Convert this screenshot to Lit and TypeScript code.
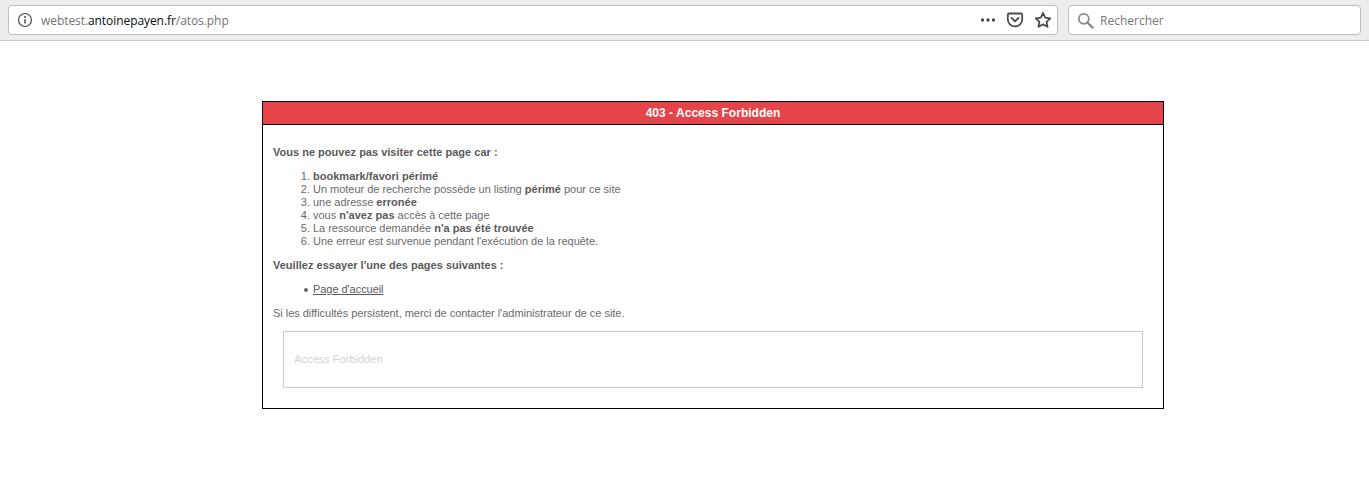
import { LitElement, html, css } from "lit";
import { customElement } from "lit/decorators.js";

@customElement("app-root")
export class AppRoot extends LitElement {
  static styles = css`
    :host { display: block; background: #fff; min-height: 488px; font-family: "Liberation Sans", Arial, sans-serif; }
    .toolbar { display: flex; align-items: center; gap: 10px; height: 40px; box-sizing: content-box; padding: 0 8px; background: #ededed; border-bottom: 1px solid #c8c8c8; font-family: "Open Sans", "Noto Sans", sans-serif; font-size: 12px; }
    .field { display: flex; align-items: center; box-sizing: border-box; height: 30px; background: #fff; border: 1px solid #bdbdbd; border-radius: 4px; }
    .url { width: 1050px; padding: 0 5px 0 8px; }
    .search { width: 293px; padding-left: 8px; color: #777; }
    .info { margin-right: 8px; flex: none; }
    .address { flex: 1; color: #737373; white-space: nowrap; letter-spacing: -0.07px; }
    .address b { font-weight: 400; color: #0c0c0d; }
    .actions { display: flex; align-items: center; gap: 10px; color: #4a4a4f; }
    .actions svg { display: block; flex: none; }
    .glass { margin-right: 6px; flex: none; }
    .page { padding: 60px 0 0 262px; }
    .box { box-sizing: border-box; width: 902px; height: 308px; border: 1px solid #000; font-size: 11px; line-height: 13px; color: #6a6a6a; letter-spacing: -0.025px; }
    .title { height: 22px; line-height: 22px; background: #e5444a; border-bottom: 1px solid #000; color: #fff; font-size: 12px; font-weight: 700; text-align: center; letter-spacing: 0.02px; }
    .body { padding: 21px 10px 0; }
    p { margin: 0 0 11px; }
    .lead { font-weight: 700; color: #5a5a5a; letter-spacing: 0.01px; }
    ol, ul { margin: 0 0 11px; padding: 0 0 0 40px; }
    ul { list-style: none; }
    ul li { display: flex; align-items: center; }
    ul li::before { content: ""; flex: none; width: 4px; height: 4px; margin: 0 5px 0 -9px; border-radius: 50%; background: #6a6a6a; }
    li b { color: #5a5a5a; letter-spacing: 0.02px; }
    a { color: #5a5a5a; text-decoration: underline; letter-spacing: -0.05px; }
    .note { box-sizing: border-box; height: 57px; margin: 0 10px; padding: 0 10px; border: 1px solid #c8c8c8; display: flex; align-items: center; color: #d3d3d3; letter-spacing: 0.03px; }
  `;

  render() {
    return html`
      <div class="toolbar">
        <div class="field url">
          <svg class="info" width="16" height="16" viewBox="0 0 16 16" fill="none" stroke="#4a4a4f">
            <circle cx="8" cy="8" r="6.5" stroke-width="1.2"></circle>
            <path d="M8 7.2v4.2" stroke-width="1.5"></path>
            <circle cx="8" cy="5" r="1" fill="#4a4a4f" stroke="none"></circle>
          </svg>
          <span class="address">webtest.<b>antoinepayen.fr</b>/atos.php</span>
          <div class="actions">
            <svg width="16" height="16" viewBox="0 0 16 16" fill="#4a4a4f">
              <circle cx="2.5" cy="8" r="1.7"></circle><circle cx="8" cy="8" r="1.7"></circle><circle cx="13.5" cy="8" r="1.7"></circle>
            </svg>
            <svg width="18" height="18" viewBox="0 0 18 18" fill="none" stroke="#4a4a4f" stroke-width="1.8" stroke-linecap="round" stroke-linejoin="round">
              <path d="M3.2 2.5h11.6c.8 0 1.4.6 1.4 1.4v4.3c0 4-3.2 7.2-7.2 7.2s-7.2-3.2-7.2-7.2V3.900c0-.8.6-1.400 1.400-1.400z"></path>
              <path d="M5.600 7l3.400 3.300L12.400 7"></path>
            </svg>
            <svg width="18" height="18" viewBox="0 0 18 18" fill="none" stroke="#4a4a4f" stroke-width="1.800" stroke-linejoin="round">
              <path d="M9 2l2.200 4.600 5 .7-3.600 3.500.9 5L9 13.400l-4.500 2.400.9-5-3.600-3.500 5-.7z"></path>
            </svg>
          </div>
        </div>
        <div class="field search">
          <svg class="glass" width="17" height="17" viewBox="0 0 17 17" fill="none" stroke="#8a8a8a">
            <circle cx="6.800" cy="6.800" r="5" stroke-width="1.800"></circle>
            <path d="M10.600 10.600l5 5" stroke-width="2.200" stroke-linecap="round"></path>
          </svg>
          <span>Rechercher</span>
        </div>
      </div>
      <main class="page">
        <section class="box">
          <div class="title">403 - Access Forbidden</div>
          <div class="body">
            <p class="lead">Vous ne pouvez pas visiter cette page car :</p>
            <ol>
              <li><b>bookmark/favori périmé</b></li>
              <li>Un moteur de recherche possède un listing <b>périmé</b> pour ce site</li>
              <li>une adresse <b>erronée</b></li>
              <li>vous <b>n'avez pas</b> accès à cette page</li>
              <li>La ressource demandée <b>n'a pas été trouvée</b></li>
              <li>Une erreur est survenue pendant l'exécution de la requête.</li>
            </ol>
            <p class="lead">Veuillez essayer l'une des pages suivantes :</p>
            <ul>
              <li><a href="#">Page d'accueil</a></li>
            </ul>
            <p>Si les difficultés persistent, merci de contacter l'administrateur de ce site.</p>
            <div class="note">Access Forbidden</div>
          </div>
        </section>
      </main>
    `;
  }
}
